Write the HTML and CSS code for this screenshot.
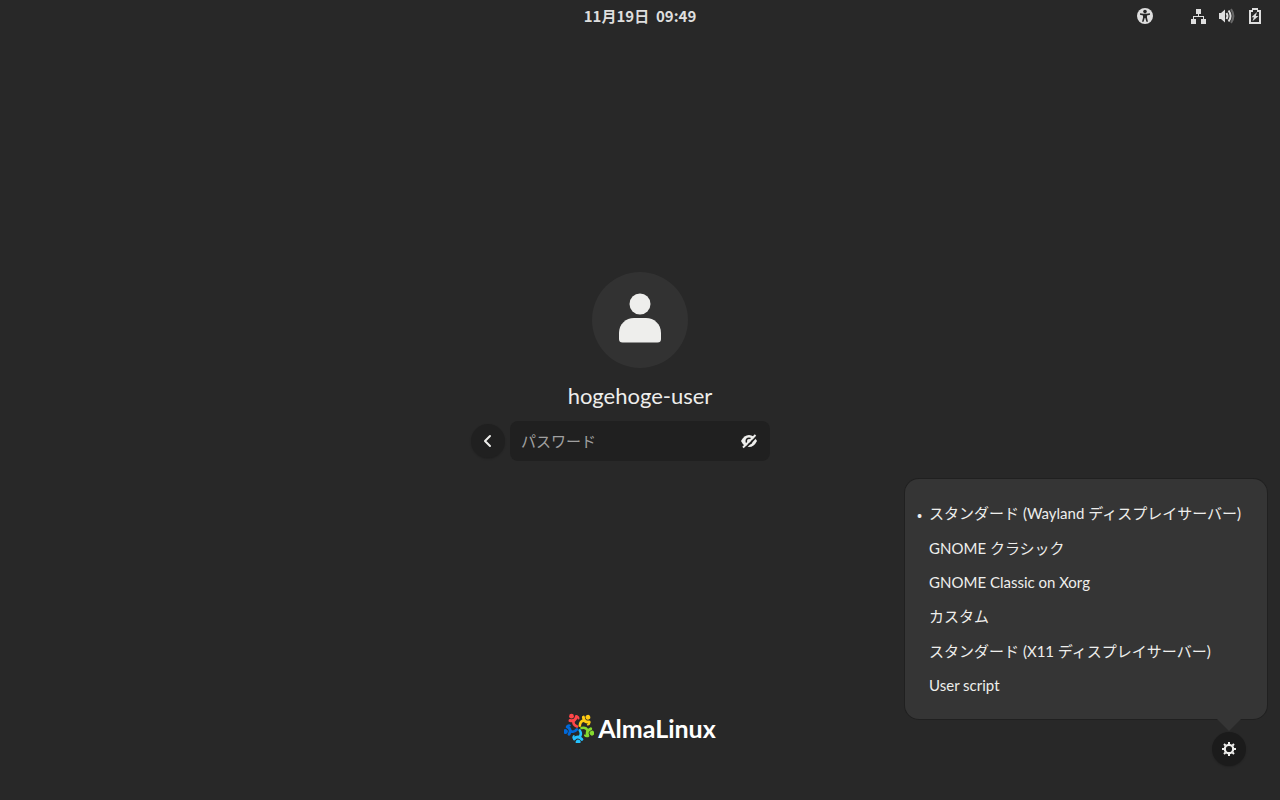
FILE: index.html
```html
<!DOCTYPE html>
<html lang="ja">
<head>
    <meta charset="UTF-8">
    <meta name="viewport" content="width=device-width, initial-scale=1.0">
    <title>AlmaLinux</title>
    <link rel="stylesheet" href="styles.css">
</head>
<body>
    <header class="panel">
        <time class="clock" datetime="11-19T09:49">11月19日&nbsp; 09:49</time>
        <div class="status">
            <button class="panel-button" aria-label="アクセシビリティ">
                <svg width="16" height="16" viewBox="0 0 16 16">
                    <circle cx="8" cy="8" r="8" fill="#dedede"/>
                    <circle cx="8" cy="3.6" r="1.8" fill="#282828"/>
                    <path d="M3 5.2 6.5 5.8h3L13 5.2v1.6l-3 .8v2.2l1 4H9.4L8.3 10h-.6l-1.1 3.8H5l1-4V7.6l-3-.8z" fill="#282828"/>
                </svg>
            </button>
            <button class="panel-button system" aria-label="システム">
                <svg width="16" height="16" viewBox="0 0 16 16" fill="#dedede">
                    <path d="M5 1h5v5H8v2h5v3h2v5h-5v-5h2V9H3v2h2v5H0v-5h2V8h5V6H5z"/>
                </svg>
                <svg width="16" height="16" viewBox="0 0 16 16" fill="none" stroke="#dedede" stroke-width="2">
                    <path d="M0 5h2l4-3.5v13L2 11H0z" fill="#dedede" stroke="none"/>
                    <path d="M7.5 5q2 3 0 6"/>
                    <path d="M9.6 2.5q4 5.5 0 11"/>
                    <path d="M12 1.2q4.8 6.8 0 13.6" opacity=".35"/>
                </svg>
                <svg width="16" height="16" viewBox="0 0 16 16" fill="#dedede">
                    <path fill-rule="evenodd" d="M5 0h6v2h3v14H2V2h3zM4 4v10h8V4h-2V2H6v2z"/>
                    <path d="M10 4 4.5 9.3h2.4L5.5 13.3l6-5.3H8.8z"/>
                </svg>
            </button>
        </div>
    </header>

    <main class="login">
        <div class="avatar">
            <svg width="96" height="96" viewBox="0 0 96 96" fill="#eeeeec">
                <circle cx="48" cy="32" r="10.5"/>
                <path d="M27 61c0-9 7-15 15-15h12c8 0 15 6 15 15v6q0 3.5-3.5 3.5h-35Q27 70.5 27 67z"/>
            </svg>
        </div>
        <h1 class="user-name">hogehoge-user</h1>
        <form class="prompt">
            <button type="button" class="round-button" aria-label="戻る">
                <svg width="16" height="16" viewBox="0 0 16 16" fill="none" stroke="#eeeeec" stroke-width="2" stroke-linecap="round" stroke-linejoin="round">
                    <path d="M10 3 5 8l5 5"/>
                </svg>
            </button>
            <div class="entry">
                <input type="password" placeholder="パスワード" aria-label="パスワード">
                <button type="button" class="peek" aria-label="パスワードを表示">
                    <svg width="16" height="16" viewBox="0 0 16 16">
                        <path d="M0 8q3-6 8-6t8 6q-3 6-8 6T0 8z" fill="#eeeeec"/>
                        <circle cx="8" cy="8" r="3.5" fill="#202020"/>
                        <circle cx="8" cy="8" r="2" fill="#eeeeec"/>
                        <path d="M3.6 15.6 15.6 3.6" stroke="#202020" stroke-width="2"/>
                        <path d="M2 14.5 14.5 2" stroke="#eeeeec" stroke-width="2"/>
                    </svg>
                </button>
            </div>
        </form>
    </main>

    <footer class="bottom">
        <div class="logo">
            <svg width="30" height="30" viewBox="-15 -15 30 30">
                <defs>
                    <g id="figure" fill="none" stroke="currentColor" stroke-linecap="round">
                        <circle cx="-7.5" cy="-11.8" r="2.4" stroke="none" fill="currentColor"/>
                        <path d="M-9-7.5C-5-6.500-3-8.500-2.600-11.500" stroke-width="3"/>
                        <path d="M-2.600-11.500Q-.5-11.500-.5-9.500" stroke-width="2"/>
                        <path d="M-5.500-7C-6-4.500-4.500-2.500-2-1.500" stroke-width="2.600"/>
                    </g>
                </defs>
                <use href="#figure" color="#ff4649"/>
                <use href="#figure" color="#ffcb12" transform="rotate(72)"/>
                <use href="#figure" color="#86da2f" transform="rotate(144)"/>
                <use href="#figure" color="#24c2ff" transform="rotate(216)"/>
                <use href="#figure" color="#0069da" transform="rotate(288)"/>
            </svg>
            <span>AlmaLinux</span>
        </div>
        <div class="session">
            <div class="session-menu" role="menu">
                <button class="item selected" role="menuitemradio" aria-checked="true">スタンダード (Wayland ディスプレイサーバー)</button>
                <button class="item" role="menuitemradio" aria-checked="false">GNOME クラシック</button>
                <button class="item latin" role="menuitemradio" aria-checked="false">GNOME Classic on Xorg</button>
                <button class="item" role="menuitemradio" aria-checked="false">カスタム</button>
                <button class="item" role="menuitemradio" aria-checked="false">スタンダード (X11 ディスプレイサーバー)</button>
                <button class="item latin" role="menuitemradio" aria-checked="false">User script</button>
            </div>
            <button class="round-button gear" aria-label="セッションを選択">
                <svg width="16" height="16" viewBox="-8 -8 16 16" fill="none" stroke="#eeeeec">
                    <circle r="4.2" stroke-width="2.2"/>
                    <path d="M0-7v2M0 7V5M-7 0h2M7 0H5M-5-5l1.500 1.500M5 5 3.500 3.500M-5 5l1.500-1.500M5-5 3.500-3.500" stroke-width="2"/>
                </svg>
            </button>
        </div>
    </footer>
</body>
</html>
```
FILE: styles.css
```css
* {
    box-sizing: border-box;
}
body {
    margin: 0;
    min-height: 100vh;
    display: flex;
    flex-direction: column;
    background-color: #282828;
    color: #eeeeec;
    font-family: Lato, "Noto Sans CJK JP", sans-serif;
    font-size: 15px;
}
button {
    padding: 0;
    border: none;
    background: none;
    color: inherit;
    font: inherit;
    cursor: pointer;
}
svg {
    display: block;
}

/* Top panel */
.panel {
    display: grid;
    grid-template-columns: 1fr auto 1fr;
    align-items: center;
    height: 32px;
    padding: 0 17px;
}
.clock {
    grid-column: 2;
    color: #dedede;
    font-family: "Noto Sans CJK JP", sans-serif;
    font-weight: bold;
    line-height: 32px;
}
.status {
    display: flex;
    justify-content: flex-end;
    gap: 38px;
}
.panel-button {
    display: flex;
    gap: 12px;
}

/* Login prompt */
.login {
    flex: 1;
    display: flex;
    flex-direction: column;
    align-items: center;
    justify-content: center;
    padding-bottom: 14px;
}
.avatar {
    width: 96px;
    height: 96px;
    border-radius: 50%;
    background-color: #323232;
}
.user-name {
    margin: 12px 0 10px;
    font-size: 22px;
    font-weight: normal;
    line-height: 31px;
}
.prompt {
    display: grid;
    grid-template-columns: 34px 260px 34px;
    align-items: center;
    gap: 5px;
}
.round-button {
    display: flex;
    align-items: center;
    justify-content: center;
    width: 34px;
    height: 34px;
    border-radius: 50%;
    background-color: #202020;
    box-shadow: 0 1px 2px rgba(0, 0, 0, 0.2);
}
.entry {
    display: flex;
    align-items: center;
    height: 40px;
    padding: 0 13px 0 11px;
    border-radius: 8px;
    background-color: #202020;
}
.entry input {
    flex: 1;
    min-width: 0;
    padding: 0;
    border: none;
    outline: none;
    background: none;
    color: #eeeeec;
    font: inherit;
}
.entry input::placeholder {
    color: #a0a0a0;
}

/* Logo and session picker */
.bottom {
    display: grid;
    grid-template-columns: 1fr auto 1fr;
    padding: 0 34px 34px;
}
.logo {
    grid-column: 2;
    display: flex;
    align-items: center;
    gap: 4px;
    height: 28px;
    color: #fff;
    font-size: 25px;
    font-weight: bold;
}
.session {
    position: relative;
    justify-self: end;
    padding-top: 18px;
}
.gear {
    background-color: #1b1b1b;
}
.session-menu {
    position: absolute;
    right: -21px;
    bottom: 47px;
    display: flex;
    flex-direction: column;
    padding: 17px 26px 17px 24px;
    border-radius: 14px;
    background-color: #353535;
    box-shadow: 0 0 0 1px #202020;
}
.session-menu::after {
    content: "";
    position: absolute;
    top: 100%;
    right: 26px;
    border: 12px solid transparent;
    border-top-color: #353535;
    border-bottom: none;
}
.item {
    position: relative;
    line-height: 35px;
    text-align: left;
    white-space: nowrap;
}
.latin {
    line-height: 33px;
}
.selected::before {
    content: "•";
    position: absolute;
    left: -12px;
    font-family: "Noto Sans CJK JP", sans-serif;
}
```
